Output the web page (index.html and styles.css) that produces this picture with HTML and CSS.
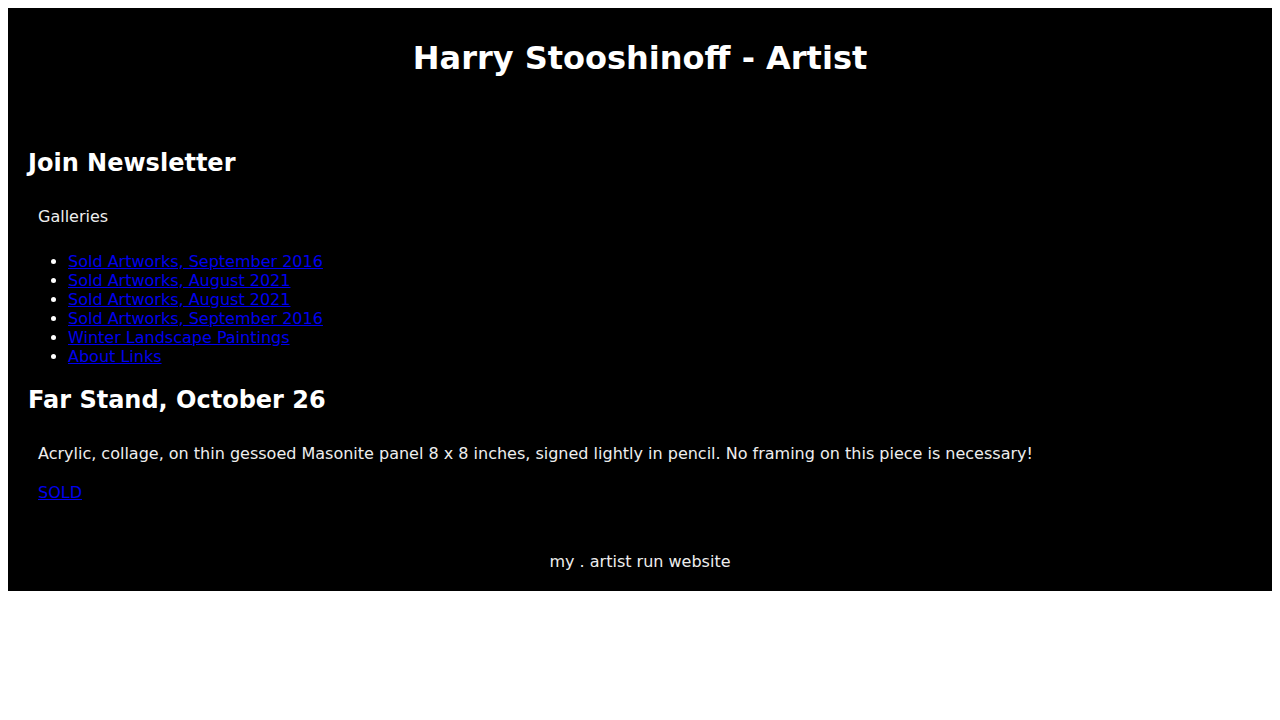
FILE: index.html
```html
<!DOCTYPE html>
<html lang="en">
<head>
<meta charset="utf-8">
<title>Harry Stooshinoff - Artist</title>
<link rel="stylesheet" href="styles.css">
</head>
<body>
<div class="page">
  <header class="site-header">
    <h1 class="site-title">Harry Stooshinoff - Artist</h1>
  </header>
  <main class="content">
    <section class="nav-section">
      <h2 class="section-title">Join Newsletter</h2>
      <p class="text-block">Galleries</p>
      <ul class="gallery-list">
        <li><a href="#">Sold Artworks, September 2016</a></li>
        <li><a href="#">Sold Artworks, August 2021</a></li>
        <li><a href="#">Sold Artworks, August 2021</a></li>
        <li><a href="#">Sold Artworks, September 2016</a></li>
        <li><a href="#">Winter Landscape Paintings</a></li>
        <li><a href="#">About Links</a></li>
      </ul>
    </section>
    <section class="artwork">
      <h2 class="section-title">Far Stand, October 26</h2>
      <p class="text-block">Acrylic, collage, on thin gessoed Masonite panel 8 x 8 inches, signed lightly in pencil. No framing on this piece is necessary!</p>
      <p class="status"><a href="#">SOLD</a></p>
    </section>
  </main>
  <footer class="site-footer">my . artist run website</footer>
</div>
</body>
</html>
```
FILE: styles.css
```css
html, body {
  margin: 0;
  padding: 0;
  background: #fff;
}
body {
  padding: 8px;
  font-family: "DejaVu Sans", sans-serif;
  font-size: 16px;
  line-height: 19px;
}
.page {
  background: #000;
  color: #eee;
  padding: 32px 20px 20px;
}
.site-title {
  margin: 0;
  text-align: center;
  font-size: 32px;
  line-height: 37px;
  font-weight: bold;
  color: #fff;
}
.content {
  margin-top: 72px;
}
.section-title {
  margin: 0 0 20px;
  font-size: 24px;
  line-height: 28px;
  font-weight: bold;
  color: #fff;
}
.text-block {
  margin: 0;
  padding: 10px;
}
.gallery-list {
  margin: 16px 0 20px;
  padding-left: 40px;
  color: #fff;
}
.gallery-list a,
.status a {
  color: #0000ee;
}
.status {
  margin: 0;
  padding: 10px;
}
.site-footer {
  margin-top: 40px;
  text-align: center;
}
```
